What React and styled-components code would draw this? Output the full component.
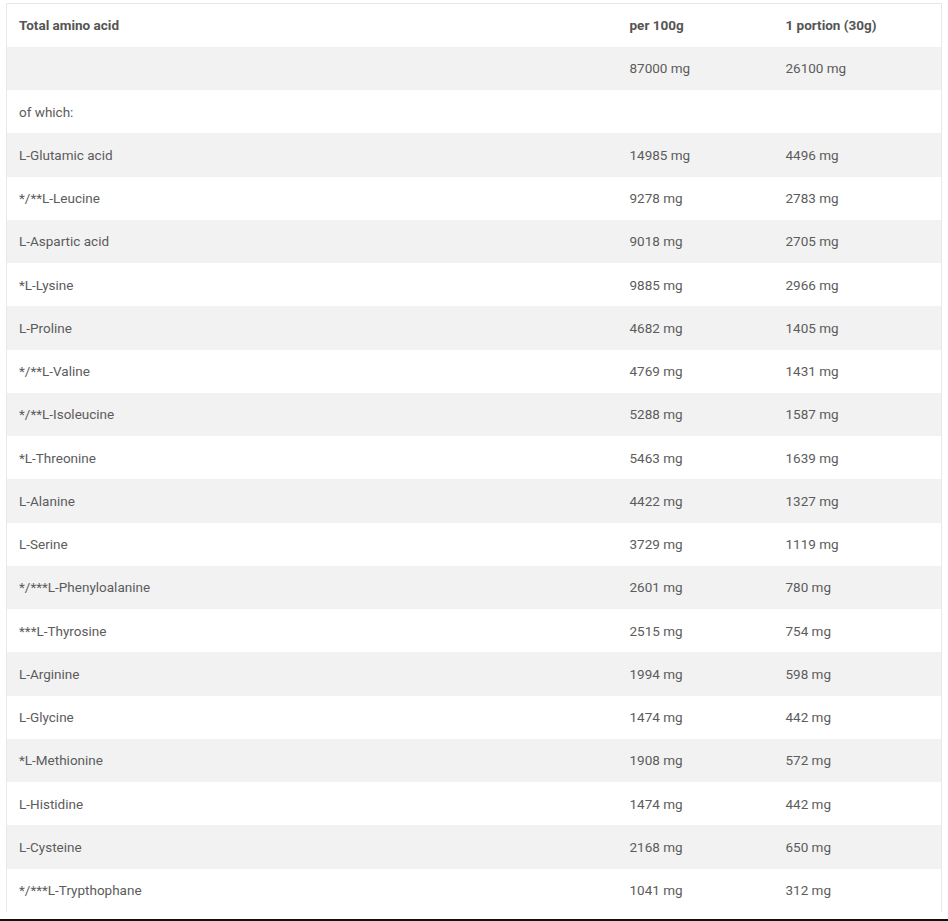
import React from "react";
import styled, { createGlobalStyle } from "styled-components";

const rows = [
  ["", "87000 mg", "26100 mg"],
  ["of which:", "", ""],
  ["L-Glutamic acid", "14985 mg", "4496 mg"],
  ["*/**L-Leucine", "9278 mg", "2783 mg"],
  ["L-Aspartic acid", "9018 mg", "2705 mg"],
  ["*L-Lysine", "9885 mg", "2966 mg"],
  ["L-Proline", "4682 mg", "1405 mg"],
  ["*/**L-Valine", "4769 mg", "1431 mg"],
  ["*/**L-Isoleucine", "5288 mg", "1587 mg"],
  ["*L-Threonine", "5463 mg", "1639 mg"],
  ["L-Alanine", "4422 mg", "1327 mg"],
  ["L-Serine", "3729 mg", "1119 mg"],
  ["*/***L-Phenyloalanine", "2601 mg", "780 mg"],
  ["***L-Thyrosine", "2515 mg", "754 mg"],
  ["L-Arginine", "1994 mg", "598 mg"],
  ["L-Glycine", "1474 mg", "442 mg"],
  ["*L-Methionine", "1908 mg", "572 mg"],
  ["L-Histidine", "1474 mg", "442 mg"],
  ["L-Cysteine", "2168 mg", "650 mg"],
  ["*/***L-Trypthophane", "1041 mg", "312 mg"],
];

const GlobalStyle = createGlobalStyle`
  html, body {
    margin: 0;
    background: #fff;
  }
`;

const Page = styled.div`
  padding: 3px 7px 0 6px;
  font-family: Roboto, "Liberation Sans", sans-serif;
`;

const Table = styled.table`
  width: 935px;
  border-collapse: collapse;
  border: 1px solid #e8e8e8;
  border-bottom: none;
  table-layout: fixed;
  font-size: 13.5px;
`;

const Row = styled.tr`
  background: ${(p) => (p.$striped ? "#f2f2f2" : "#fff")};
`;

const Cell = styled.td`
  height: 43.25px;
  box-sizing: border-box;
  padding: 1px 12px 0;
  line-height: 19px;
  vertical-align: middle;
  font-weight: ${(p) => (p.$head ? 700 : 400)};
  color: ${(p) => (p.$head ? "#555" : "#5c5c5c")};
  white-space: nowrap;
`;

const BottomEdge = styled.div`
  height: 2px;
  margin-top: 7px;
  background: #111;
`;

export default function App() {
  return (
    <>
      <GlobalStyle />
      <Page>
        <Table>
          <colgroup>
            <col style={{ width: 611 }} />
            <col style={{ width: 156 }} />
            <col style={{ width: 168 }} />
          </colgroup>
          <tbody>
            <Row>
              <Cell $head>Total amino acid</Cell>
              <Cell $head>per 100g</Cell>
              <Cell $head>1 portion (30g)</Cell>
            </Row>
            {rows.map((r, i) => (
              <Row key={i} $striped={i % 2 === 0}>
                <Cell>{r[0]}</Cell>
                <Cell>{r[1]}</Cell>
                <Cell>{r[2]}</Cell>
              </Row>
            ))}
          </tbody>
        </Table>
      </Page>
      <BottomEdge />
    </>
  );
}
